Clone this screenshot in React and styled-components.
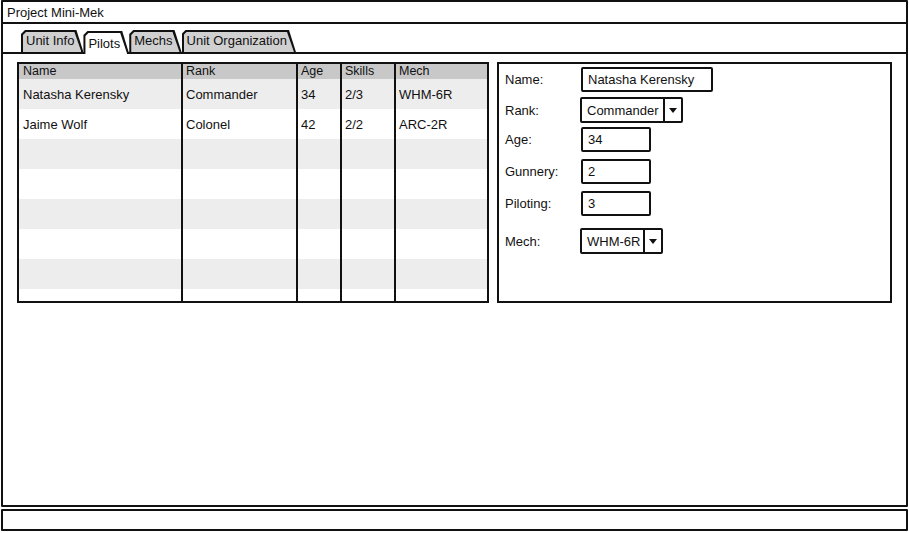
import React from "react";
import styled, { createGlobalStyle } from "styled-components";

const GlobalStyle = createGlobalStyle`
  html, body { margin: 0; padding: 0; background: #fff; }
  body { font-family: "Liberation Sans", Arial, sans-serif; color: #111; }
`;

const Page = styled.div`
  width: 909px;
  height: 533px;
  display: flex;
  flex-direction: column;
  box-sizing: border-box;
  padding: 0 1px 0 1px;
`;

const Window = styled.div`
  height: 507px;
  box-sizing: border-box;
  border: 2px solid #111;
  border-radius: 1px;
  display: flex;
  flex-direction: column;
`;

const TitleBar = styled.div`
  height: 20px;
  border-bottom: 2px solid #111;
  padding-left: 4px;
  display: flex;
  align-items: center;
  font-size: 13px;
`;

const TabStrip = styled.div`
  height: 28px;
  display: flex;
  align-items: flex-end;
  padding-left: 18px;
  gap: 0;
`;

const Tab = styled.div`
  position: relative;
  z-index: ${(p) => (p.$active ? 2 : 1)};
  height: ${(p) => (p.$active ? "23px" : "22px")};
  margin-bottom: ${(p) => (p.$active ? "-2px" : "0")};
  background: #111;
  padding: 2px 2px 0 2px;
  box-sizing: border-box;
  clip-path: polygon(0 4px, 4px 0, calc(100% - 7px) 0, 100% 100%, 0 100%);
  display: flex;
`;

const TabFace = styled.div`
  flex: 1;
  background: ${(p) => (p.$active ? "#fff" : "#d0d0d0")};
  clip-path: polygon(0 3px, 3px 0, calc(100% - 7px) 0, 100% 100%, 0 100%);
  padding: ${(p) => (p.$active ? "3px 7px 0 3px" : "1px 7px 0 3px")};
  font-size: 13px;
  white-space: nowrap;
`;

const TabPanel = styled.div`
  flex: 1;
  border-top: 2px solid #111;
  padding: 8px 0 0 14px;
`;

const Split = styled.div`
  display: grid;
  grid-template-columns: 472px 395px;
  gap: 8px;
  height: 241px;
`;

const TableBox = styled.div`
  border: 2px solid #111;
  overflow: hidden;
  box-sizing: border-box;
`;

const Grid = styled.table`
  border-collapse: collapse;
  table-layout: fixed;
  width: 468px;
`;

const HeadCell = styled.th`
  background: #c8c8c8;
  height: 15px;
  padding: 0 3px;
  font-weight: normal;
  font-size: 12.5px;
  text-align: left;
  line-height: 15px;
  &:first-child { padding-left: 4px; }
  & + & { border-left: 2px solid #111; }
`;

const Row = styled.tr`
  background: ${(p) => (p.$odd ? "#ededed" : "#fff")};
`;

const Cell = styled.td`
  height: 30px;
  padding: 0 3px;
  font-size: 13px;
  white-space: nowrap;
  &:first-child { padding-left: 4px; }
  & + & { border-left: 2px solid #111; }
`;

const FormBox = styled.div`
  border: 2px solid #111;
  box-sizing: border-box;
  padding: 3px 0 0 6px;
  display: flex;
  flex-direction: column;
`;

const FieldRow = styled.div`
  display: flex;
  align-items: center;
  margin-top: ${(p) => p.$mt}px;
`;

const Label = styled.div`
  width: 76px;
  font-size: 13px;
`;

const TextBox = styled.div`
  width: ${(p) => p.$w}px;
  height: 25px;
  box-sizing: border-box;
  border: 2px solid #111;
  border-radius: 2px;
  padding-left: 5px;
  display: flex;
  align-items: center;
  font-size: 13px;
`;

const Combo = styled.div`
  width: ${(p) => p.$w}px;
  height: 26px;
  box-sizing: border-box;
  border: 2px solid #111;
  border-radius: 2px;
  display: flex;
  margin-left: -1px;
  font-size: 13px;
`;

const ComboValue = styled.div`
  flex: 1;
  padding-left: 5px;
  display: flex;
  align-items: center;
  border-right: 2px solid #111;
`;

const ComboArrow = styled.div`
  width: 16px;
  display: flex;
  align-items: center;
  justify-content: center;
  &::after {
    content: "";
    border-left: 4px solid transparent;
    border-right: 4px solid transparent;
    border-top: 5px solid #111;
  }
`;

const StatusBar = styled.div`
  margin-top: 2px;
  height: 22px;
  box-sizing: border-box;
  border: 2px solid #111;
  border-radius: 1px;
`;

const pilots = [
  ["Natasha Kerensky", "Commander", "34", "2/3", "WHM-6R"],
  ["Jaime Wolf", "Colonel", "42", "2/2", "ARC-2R"],
];

const columns = [
  ["Name", 163],
  ["Rank", 115],
  ["Age", 44],
  ["Skills", 54],
  ["Mech", 92],
];

export default function App() {
  const rows = [...pilots];
  while (rows.length < 8) rows.push(["", "", "", "", ""]);

  return (
    <Page>
      <GlobalStyle />
      <Window>
        <TitleBar>Project Mini-Mek</TitleBar>
        <TabStrip>
          {["Unit Info", "Pilots", "Mechs", "Unit Organization"].map((t) => (
            <Tab key={t} $active={t === "Pilots"}>
              <TabFace $active={t === "Pilots"}>{t}</TabFace>
            </Tab>
          ))}
        </TabStrip>
        <TabPanel>
          <Split>
            <TableBox>
              <Grid>
                <colgroup>
                  {columns.map(([n, w]) => (
                    <col key={n} style={{ width: w }} />
                  ))}
                </colgroup>
                <thead>
                  <tr>
                    {columns.map(([n]) => (
                      <HeadCell key={n}>{n}</HeadCell>
                    ))}
                  </tr>
                </thead>
                <tbody>
                  {rows.map((r, i) => (
                    <Row key={i} $odd={i % 2 === 0}>
                      {r.map((c, j) => (
                        <Cell key={j}>{c}</Cell>
                      ))}
                    </Row>
                  ))}
                </tbody>
              </Grid>
            </TableBox>
            <FormBox>
              <FieldRow $mt={0}>
                <Label>Name:</Label>
                <TextBox $w={132}>Natasha Kerensky</TextBox>
              </FieldRow>
              <FieldRow $mt={5}>
                <Label>Rank:</Label>
                <Combo $w={103}>
                  <ComboValue>Commander</ComboValue>
                  <ComboArrow />
                </Combo>
              </FieldRow>
              <FieldRow $mt={4}>
                <Label>Age:</Label>
                <TextBox $w={70}>34</TextBox>
              </FieldRow>
              <FieldRow $mt={7}>
                <Label>Gunnery:</Label>
                <TextBox $w={70}>2</TextBox>
              </FieldRow>
              <FieldRow $mt={7}>
                <Label>Piloting:</Label>
                <TextBox $w={70}>3</TextBox>
              </FieldRow>
              <FieldRow $mt={12}>
                <Label>Mech:</Label>
                <Combo $w={83}>
                  <ComboValue>WHM-6R</ComboValue>
                  <ComboArrow />
                </Combo>
              </FieldRow>
            </FormBox>
          </Split>
        </TabPanel>
      </Window>
      <StatusBar />
    </Page>
  );
}
